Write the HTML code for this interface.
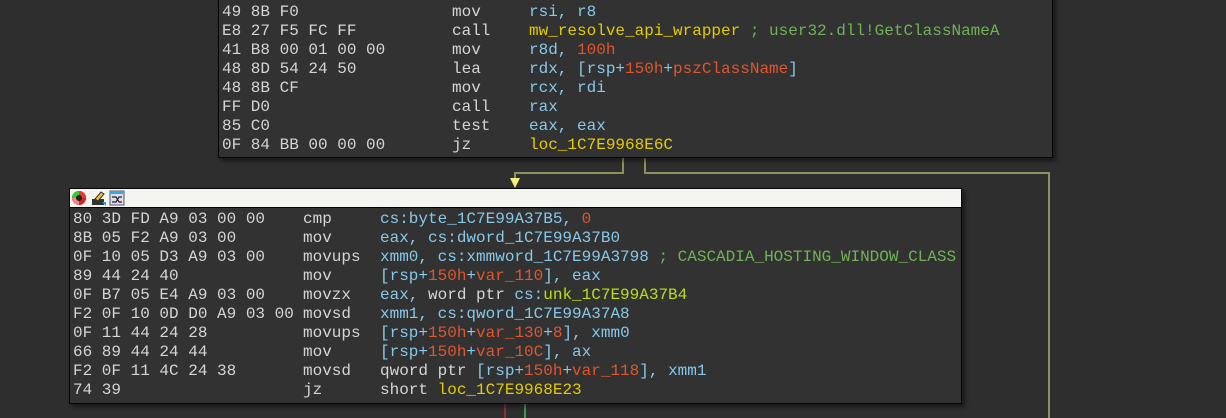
<!DOCTYPE html>
<html><head><style>
html,body{margin:0;padding:0;width:1226px;height:418px;overflow:hidden;background:#2e2e2e;}
.blk{position:absolute;background:#323232;border:1px solid #050505;box-shadow:3px 3px 4px rgba(0,0,0,.45);}
.row{position:absolute;left:3px;height:19px;line-height:19px;font-family:"Liberation Mono","Courier New",monospace;font-size:16px;color:#d4d4d4;white-space:pre;}
.b{position:absolute;left:0}
.m{position:absolute;left:230px}
.o{position:absolute;left:307px;color:#86c8ea}
.n{color:#e0552e}
.y{color:#e2cc00}
.c{color:#6fb356}
.l{color:#b6df1a}
.w{color:#d4d4d4}
.ln{position:absolute;background:#8f915c;}
.hdr{position:absolute;left:0;top:0;right:0;height:18px;background:#f5f5ef;border-bottom:1px solid #000;}
</style></head><body>
<div class="ln" style="left:622px;top:157px;width:2px;height:16px"></div>
<div class="ln" style="left:514px;top:172px;width:110px;height:2px"></div>
<div class="ln" style="left:514px;top:172px;width:2px;height:10px"></div>
<div style="position:absolute;left:510px;top:178px;width:0;height:0;border-left:5px solid transparent;border-right:5px solid transparent;border-top:10px solid #f0f07a"></div>
<div class="ln" style="left:644px;top:157px;width:2px;height:17px"></div>
<div class="ln" style="left:644px;top:172px;width:406px;height:2px"></div>
<div class="ln" style="left:1048px;top:172px;width:2px;height:246px"></div>
<div style="position:absolute;left:504px;top:404px;width:2px;height:14px;background:#8b2f2f"></div>
<div style="position:absolute;left:524px;top:404px;width:2px;height:14px;background:#3e9a50"></div>

<div class="blk" style="left:218px;top:-10px;width:833px;height:166px">
<div class="row" style="top:12px"><span class="b">49 8B F0</span><span class="m">mov</span><span class="o">rsi, r8</span></div>
<div class="row" style="top:31px"><span class="b">E8 27 F5 FC FF</span><span class="m">call</span><span class="o"><span class="y">mw_resolve_api_wrapper</span><span class="c"> ; user32.dll!GetClassNameA</span></span></div>
<div class="row" style="top:50px"><span class="b">41 B8 00 01 00 00</span><span class="m">mov</span><span class="o">r8d, <span class="n">100h</span></span></div>
<div class="row" style="top:69px"><span class="b">48 8D 54 24 50</span><span class="m">lea</span><span class="o">rdx, [rsp+<span class="n">150h</span>+<span class="n">pszClassName</span>]</span></div>
<div class="row" style="top:88px"><span class="b">48 8B CF</span><span class="m">mov</span><span class="o">rcx, rdi</span></div>
<div class="row" style="top:107px"><span class="b">FF D0</span><span class="m">call</span><span class="o">rax</span></div>
<div class="row" style="top:126px"><span class="b">85 C0</span><span class="m">test</span><span class="o">eax, eax</span></div>
<div class="row" style="top:145px"><span class="b">0F 84 BB 00 00 00</span><span class="m">jz</span><span class="o"><span class="y">loc_1C7E9968E6C</span></span></div>
</div>

<div class="blk" style="left:69px;top:188px;width:891px;height:214px">
<div class="hdr">
<svg width="70" height="18" style="position:absolute;left:0;top:0">
<circle cx="9" cy="9" r="7" fill="#222"/>
<path d="M9 2 A7 7 0 0 1 16 9 L12 9 A3 3 0 0 0 9 6Z" fill="#e33"/>
<path d="M2 9 A7 7 0 0 1 9 2 L9 6 A3 3 0 0 0 6 9Z" fill="#3c3"/>
<path d="M9 16 A7 7 0 0 1 2 9 L6 9 A3 3 0 0 0 9 12Z" fill="#e88"/>
<path d="M16 9 A7 7 0 0 1 9 16 L9 12 A3 3 0 0 0 12 9Z" fill="#d22"/>
<rect x="22" y="10" width="12" height="6" fill="#333"/>
<path d="M25 10 L31 3 L34 5 L28 12Z" fill="#f0c040" stroke="#333" stroke-width="1"/>
<path d="M32 13 L36 13 L36 17 Z" fill="#39c"/>
<rect x="40" y="2" width="14" height="14" fill="#dde" stroke="#556" stroke-width="1"/>
<rect x="40" y="2" width="14" height="3" fill="#3ad"/>
<path d="M42 8 L46 8 L49 13 L52 13 M42 13 L46 13 L49 8 L52 8" stroke="#222" fill="none" stroke-width="1.2"/>
</svg>
</div>
<div class="row" style="top:21px"><span class="b">80 3D FD A9 03 00 00</span><span class="m">cmp</span><span class="o">cs:byte_1C7E99A37B5, <span class="n">0</span></span></div>
<div class="row" style="top:40px"><span class="b">8B 05 F2 A9 03 00</span><span class="m">mov</span><span class="o">eax, cs:dword_1C7E99A37B0</span></div>
<div class="row" style="top:59px"><span class="b">0F 10 05 D3 A9 03 00</span><span class="m">movups</span><span class="o">xmm0, cs:xmmword_1C7E99A3798<span class="c"> ; CASCADIA_HOSTING_WINDOW_CLASS</span></span></div>
<div class="row" style="top:78px"><span class="b">89 44 24 40</span><span class="m">mov</span><span class="o">[rsp+<span class="n">150h</span>+<span class="n">var_110</span>], eax</span></div>
<div class="row" style="top:97px"><span class="b">0F B7 05 E4 A9 03 00</span><span class="m">movzx</span><span class="o">eax, <span class="w">word ptr</span> cs:<span class="l">unk_1C7E99A37B4</span></span></div>
<div class="row" style="top:116px"><span class="b">F2 0F 10 0D D0 A9 03 00</span><span class="m">movsd</span><span class="o">xmm1, cs:qword_1C7E99A37A8</span></div>
<div class="row" style="top:135px"><span class="b">0F 11 44 24 28</span><span class="m">movups</span><span class="o">[rsp+<span class="n">150h</span>+<span class="n">var_130</span>+<span class="n">8</span>], xmm0</span></div>
<div class="row" style="top:154px"><span class="b">66 89 44 24 44</span><span class="m">mov</span><span class="o">[rsp+<span class="n">150h</span>+<span class="n">var_10C</span>], ax</span></div>
<div class="row" style="top:173px"><span class="b">F2 0F 11 4C 24 38</span><span class="m">movsd</span><span class="o"><span class="w">qword ptr</span> [rsp+<span class="n">150h</span>+<span class="n">var_118</span>], xmm1</span></div>
<div class="row" style="top:192px"><span class="b">74 39</span><span class="m">jz</span><span class="o"><span class="w">short</span> <span class="y">loc_1C7E9968E23</span></span></div>
</div>
</body></html>
